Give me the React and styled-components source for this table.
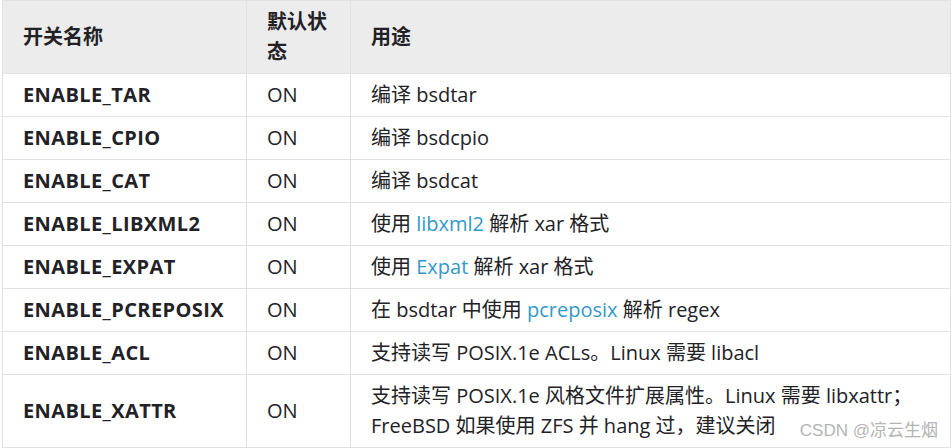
import React from 'react';
import styled, { createGlobalStyle } from 'styled-components';

const GlobalStyle = createGlobalStyle`
  html, body {
    margin: 0;
    padding: 0;
    background: #fff;
  }
  body {
    font-family: "Open Sans", "Noto Sans CJK SC", sans-serif;
    color: #222226;
  }
`;

const Wrapper = styled.div`
  position: relative;
  width: 952px;
  height: 448px;
  padding-left: 2px;
  box-sizing: border-box;
  overflow: hidden;
`;

const Table = styled.table`
  width: 949px;
  border-collapse: collapse;
  table-layout: fixed;
  font-size: 20px;
  line-height: 30px;
`;

const HeadCell = styled.th`
  background: #ececec;
  border: 1px solid #e2e2e2;
  padding: 6px 20px;
  text-align: left;
  font-weight: 700;
  vertical-align: middle;
`;

const Cell = styled.td`
  border: 1px solid #e2e2e2;
  padding: 6px 20px;
  vertical-align: middle;
  font-weight: ${(p) => (p.$bold ? 700 : 400)};
  letter-spacing: ${(p) => (p.$bold ? '0.4px' : 'normal')};
`;

const Link = styled.a`
  color: #3399cc;
  text-decoration: none;
`;

const Watermark = styled.div`
  position: absolute;
  right: 14px;
  bottom: 7px;
  font-family: "Liberation Sans", "Noto Sans CJK SC", sans-serif;
  font-size: 17px;
  color: #b4b4b4;
`;

const rows = [
  ['ENABLE_TAR', '编译 bsdtar'],
  ['ENABLE_CPIO', '编译 bsdcpio'],
  ['ENABLE_CAT', '编译 bsdcat'],
  ['ENABLE_LIBXML2', <>使用 <Link href="#">libxml2</Link> 解析 xar 格式</>],
  ['ENABLE_EXPAT', <>使用 <Link href="#">Expat</Link> 解析 xar 格式</>],
  ['ENABLE_PCREPOSIX', <>在 bsdtar 中使用 <Link href="#">pcreposix</Link> 解析 regex</>],
  ['ENABLE_ACL', '支持读写 POSIX.1e ACLs。Linux 需要 libacl'],
  ['ENABLE_XATTR', <>支持读写 POSIX.1e 风格文件扩展属性。Linux 需要 libxattr；<br />FreeBSD 如果使用 ZFS 并 hang 过，建议关闭</>],
];

export default function App() {
  return (
    <>
      <GlobalStyle />
      <Wrapper>
        <Table>
          <colgroup>
            <col style={{ width: 244 }} />
            <col style={{ width: 104 }} />
            <col />
          </colgroup>
          <thead>
            <tr>
              <HeadCell>开关名称</HeadCell>
              <HeadCell>默认状态</HeadCell>
              <HeadCell>用途</HeadCell>
            </tr>
          </thead>
          <tbody>
            {rows.map(([name, use]) => (
              <tr key={name}>
                <Cell $bold>{name}</Cell>
                <Cell>ON</Cell>
                <Cell>{use}</Cell>
              </tr>
            ))}
          </tbody>
        </Table>
        <Watermark>CSDN @凉云生烟</Watermark>
      </Wrapper>
    </>
  );
}
